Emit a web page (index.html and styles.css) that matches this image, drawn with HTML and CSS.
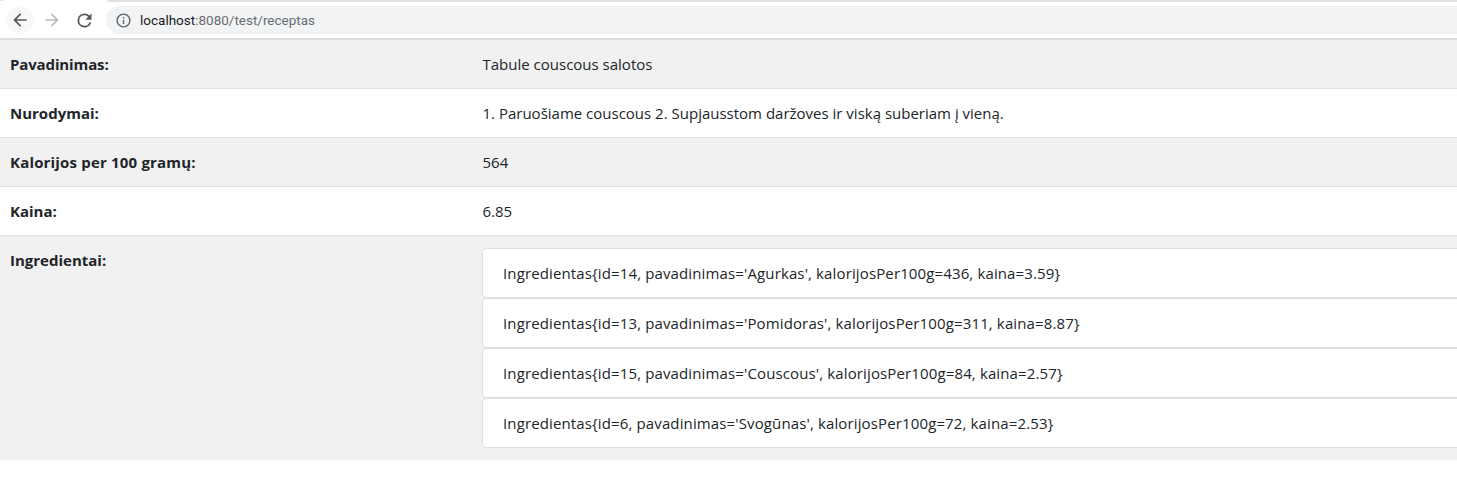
FILE: index.html
```html
<!DOCTYPE html>
<html lang="lt">
<head>
<meta charset="utf-8">
<title>Receptas</title>
<link rel="stylesheet" href="styles.css">
</head>
<body>
<header class="toolbar">
  <div class="tab-strip"><span class="tab-start"></span><span class="tab-edge"></span><span class="tab-rest"></span></div>
  <div class="controls">
    <span class="nav-button nav-back"><svg viewBox="0 0 24 24" width="20" height="20"><path fill="#54585d" d="M20 11H7.83l5.59-5.59L12 4l-8 8 8 8 1.41-1.41L7.83 13H20v-2z"/></svg></span>
    <span class="nav-button nav-forward"><svg viewBox="0 0 24 24" width="20" height="20"><path fill="#babcbe" d="M12 4l-1.41 1.41L16.17 11H4v2h12.17l-5.58 5.59L12 20l8-8z"/></svg></span>
    <span class="nav-button nav-reload"><svg viewBox="0 0 24 24" width="21" height="21"><path fill="#54585d" d="M17.65 6.35A7.96 7.96 0 0 0 12 4a8 8 0 1 0 7.73 10h-2.08A6 6 0 1 1 12 6c1.66 0 3.14.69 4.22 1.78L13 11h7V4l-2.35 2.35z"/></svg></span>
    <div class="address"><svg class="info" viewBox="0 0 24 24" width="17" height="17"><path fill="#5f6368" d="M11 17h2v-6h-2v6zm1-15a10 10 0 1 0 0 20 10 10 0 0 0 0-20zm0 18a8 8 0 1 1 0-16 8 8 0 0 1 0 16zM11 9h2V7h-2v2z"/></svg><span class="url"><b class="host">localhost</b>:8080/test/receptas</span></div>
  </div>
</header>
<main class="details">
  <div class="row striped"><div class="label tight">Pavadinimas:</div><div class="value">Tabule couscous salotos</div></div>
  <div class="row"><div class="label">Nurodymai:</div><div class="value">1. Paruošiame couscous 2. Supjausstom daržoves ir viską suberiam į vieną.</div></div>
  <div class="row striped"><div class="label wide">Kalorijos per 100 gramų:</div><div class="value">564</div></div>
  <div class="row"><div class="label">Kaina:</div><div class="value">6.85</div></div>
  <div class="row striped last"><div class="label">Ingredientai:</div>
    <ul class="ingredients">
      <li>Ingredientas{id=14, pavadinimas='Agurkas', kalorijosPer100g=436, kaina=3.59}</li>
      <li>Ingredientas{id=13, pavadinimas='Pomidoras', kalorijosPer100g=311, kaina=8.87}</li>
      <li>Ingredientas{id=15, pavadinimas='Couscous', kalorijosPer100g=84, kaina=2.57}</li>
      <li>Ingredientas{id=6, pavadinimas='Svogūnas', kalorijosPer100g=72, kaina=2.53}</li>
    </ul>
  </div>
</main>
</body>
</html>
```
FILE: styles.css
```css
* { box-sizing: border-box; }
body { margin: 0; overflow: hidden; background: #fff; color: #212529; font: 15px/24px "Open Sans", "Noto Sans", sans-serif; }
.toolbar { height: 40px; border-bottom: 2px solid #dedede; }
.tab-strip { display: flex; height: 2px; }
.tab-start { width: 3px; height: 1px; background: #dee1e6; }
.tab-edge { width: 104px; background: #fff; }
.tab-rest { flex: 1; background: #dee1e6; border-bottom-left-radius: 2px; }
.controls { display: flex; align-items: center; height: 36px; padding-left: 6px; }
.nav-button { display: flex; align-items: center; justify-content: center; width: 28px; height: 28px; margin-right: 4px; border-radius: 50%; }
.nav-back { background: #f8f8f8; }
.nav-reload { margin-right: 8px; }
.address { display: flex; flex: 1; align-items: center; height: 28px; padding-left: 9px; border-radius: 14px 0 0 14px; background: #f1f3f4; }
.info { flex: none; margin-right: 8px; }
.url { color: #6a6e73; font: 13.5px/28px Roboto, sans-serif; white-space: nowrap; }
.host { color: #202124; font-weight: 400; }
.row { display: grid; grid-template-columns: 472px 1fr; height: 49px; padding-top: 12px; border-bottom: 1px solid #dee2e6; }
.striped { background: #f1f1f1; }
.last { height: 224px; border: 0; }
.label { padding-left: 10px; font-weight: 700; white-space: nowrap; }
.tight { letter-spacing: -.13px; }
.wide { letter-spacing: .18px; }
.value { padding-left: 10.5px; white-space: nowrap; }
.ingredients { margin: 0 -20px 0 10px; padding: 0; list-style: none; }
.ingredients li { height: 50px; padding: 12px 20px; border: 1px solid #dfdfdf; border-radius: 4px; background: #fff; letter-spacing: .13px; white-space: nowrap; }
```
